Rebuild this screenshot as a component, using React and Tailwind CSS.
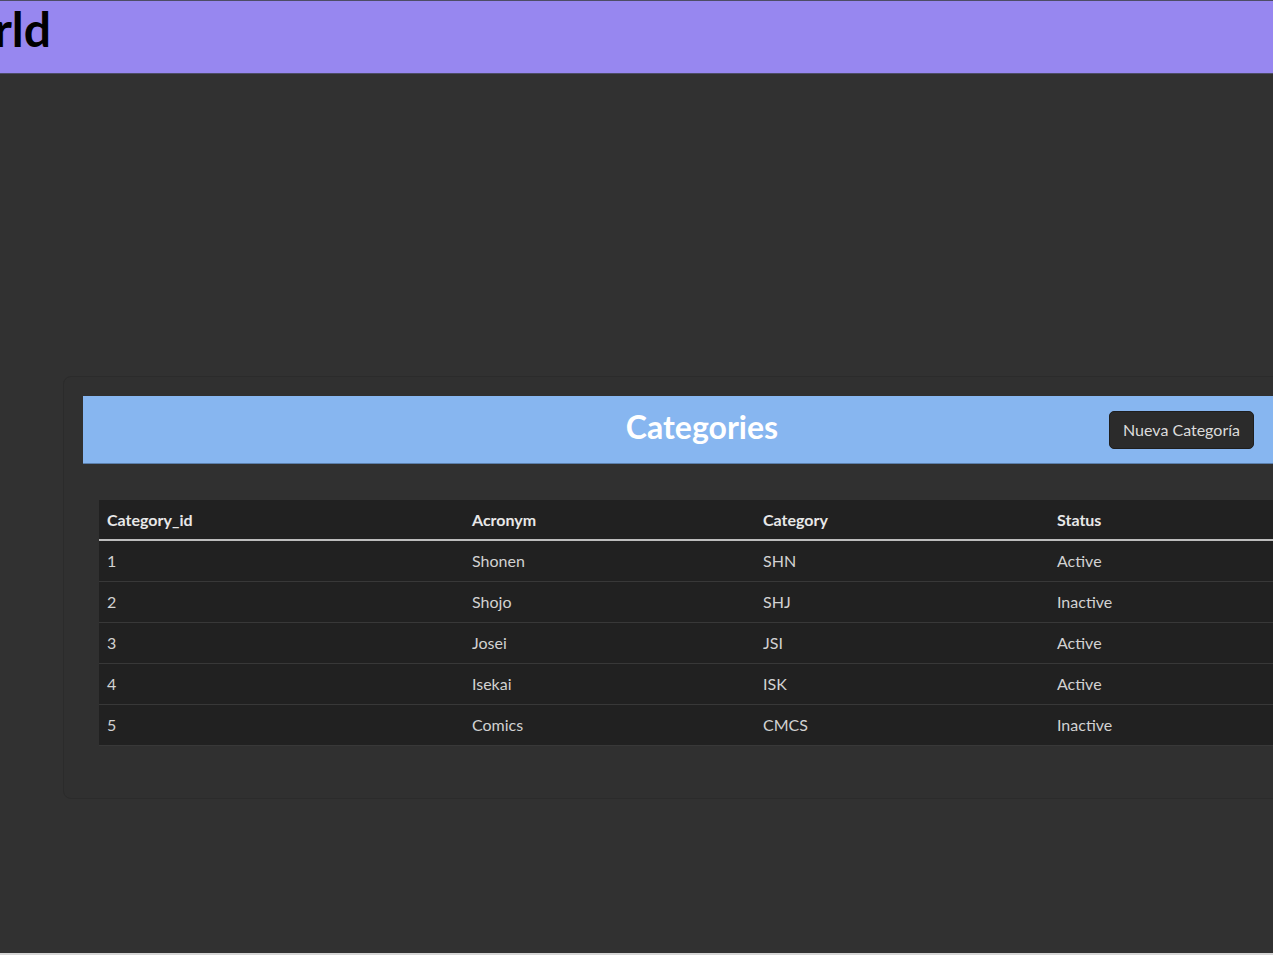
import React from 'react';

const rows = [
  { id: 1, acronym: 'Shonen', category: 'SHN', status: 'Active' },
  { id: 2, acronym: 'Shojo', category: 'SHJ', status: 'Inactive' },
  { id: 3, acronym: 'Josei', category: 'JSI', status: 'Active' },
  { id: 4, acronym: 'Isekai', category: 'ISK', status: 'Active' },
  { id: 5, acronym: 'Comics', category: 'CMCS', status: 'Inactive' },
];

export default function App() {
  return (
    <div className="w-[1273px] h-[955px] overflow-hidden bg-[#d6d6d6] font-['Lato',sans-serif]">
      <div className="h-[953px] bg-[#313131] flex flex-col">
        {/* Header */}
        <header className="h-[74px] shrink-0 bg-[#9787f0] border-t border-b border-[#4d4d66] flex items-center">
          <div className="w-[51px] flex justify-end whitespace-nowrap">
            <h1 className="text-[48px] font-bold text-black leading-none -mt-[16px]">Manga World</h1>
          </div>
        </header>

        {/* Card */}
        <div className="mt-[302px] ml-[63px] w-[1278px] h-[423px] shrink-0 rounded-[8px] border border-[#2b2b2b] bg-[#303030] px-[19px] pt-[19px]">
          <div className="h-[68px] bg-[#87b6f0] border-b border-[#5b7fab] flex items-center relative">
            <h2 className="flex-1 text-center text-[32px] font-bold text-white -mt-[6px]">Categories</h2>
            <button className="absolute right-[67px] top-[15px] h-[38px] px-[13px] rounded-[5px] bg-[#2b2b2b] border border-[#1e1e1e] text-[#dcdcdc] text-[16px]">
              Nueva Categoría
            </button>
          </div>

          <table className="mt-[36px] ml-[16px] w-[1206px] border-collapse text-[16px]">
            <thead>
              <tr className="bg-[#212121] h-[40px] border-b-2 border-[#bdbdbd]">
                <th className="w-[365px] text-left font-bold text-[#e8e8e8] pl-[8px]">Category_id</th>
                <th className="w-[291px] text-left font-bold text-[#e8e8e8] pl-[8px]">Acronym</th>
                <th className="w-[294px] text-left font-bold text-[#e8e8e8] pl-[8px]">Category</th>
                <th className="text-left font-bold text-[#e8e8e8] pl-[8px]">Status</th>
              </tr>
            </thead>
            <tbody>
              {rows.map((r) => (
                <tr key={r.id} className="bg-[#212121] h-[41px] border-b border-[#383838]">
                  <td className="pl-[8px] text-[#d2d2d2]">{r.id}</td>
                  <td className="pl-[8px] text-[#d2d2d2]">{r.acronym}</td>
                  <td className="pl-[8px] text-[#d2d2d2]">{r.category}</td>
                  <td className="pl-[8px] text-[#d2d2d2]">{r.status}</td>
                </tr>
              ))}
            </tbody>
          </table>
        </div>
      </div>
    </div>
  );
}
